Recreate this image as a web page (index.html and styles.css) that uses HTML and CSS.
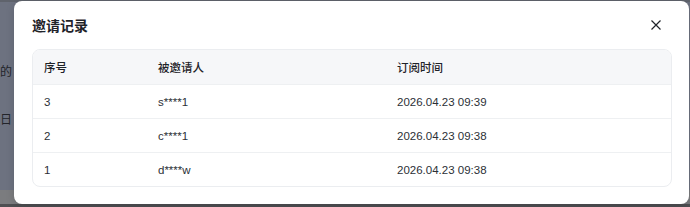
FILE: index.html
```html
<!DOCTYPE html>
<html lang="zh-CN">
  <head>
    <meta charset="UTF-8" />
    <meta name="viewport" content="width=device-width, initial-scale=1.0" />
    <title>邀请记录</title>
    <link rel="stylesheet" href="styles.css">
  </head>
  <body>
    <div class="page">
      <div class="page-top"></div>
      <div class="page-main">
        <p class="page-text first">的</p>
        <p class="page-text">日</p>
      </div>
      <div class="page-foot"></div>
    </div>

    <!-- 邀请记录弹窗 -->
    <div class="modal">
      <div class="modal-header">
        <h2>邀请记录</h2>
        <button class="close" aria-label="关闭">
          <svg width="12" height="12" viewBox="0 0 12 12">
            <path d="M1.5 1.5 L10.5 10.5 M10.5 1.5 L1.5 10.5" stroke="#1f2329" stroke-width="1.2" fill="none" />
          </svg>
        </button>
      </div>

      <div class="table">
        <div class="row head">
          <div class="cell">序号</div>
          <div class="cell">被邀请人</div>
          <div class="cell">订阅时间</div>
        </div>
        <div class="row">
          <div class="cell">3</div>
          <div class="cell">s****1</div>
          <div class="cell">2026.04.23 09:39</div>
        </div>
        <div class="row">
          <div class="cell">2</div>
          <div class="cell">c****1</div>
          <div class="cell">2026.04.23 09:38</div>
        </div>
        <div class="row">
          <div class="cell">1</div>
          <div class="cell">d****w</div>
          <div class="cell">2026.04.23 09:38</div>
        </div>
      </div>
    </div>
  </body>
</html>
```

FILE: styles.css
```css
* {
  box-sizing: border-box;
}

body {
  margin: 0;
  font-family: 'Liberation Sans', 'Noto Sans CJK SC', sans-serif;
  background-color: #6d7280;
  height: 207px;
  overflow: hidden;
}

.page {
  display: flex;
  flex-direction: column;
  height: 207px;
}

.page-top {
  height: 2px;
  background-color: #5f636c;
}

.page-main {
  flex: 1;
  padding-top: 62px;
}

.page-text {
  margin: 0;
  font-size: 12px;
  line-height: 16px;
  color: #23252b;
}

.page-text.first {
  margin-bottom: 32px;
}

.page-foot {
  height: 17px;
  background-color: #7b7c7f;
  border-bottom: 3px solid #4e4f52;
}

/* 弹窗 */
.modal {
  position: absolute;
  left: 14px;
  top: 1px;
  width: 675px;
  height: 203px;
  background-color: #fff;
  border-radius: 8px;
  box-shadow: 0 2px 8px rgba(0, 0, 0, 0.15);
  padding: 0 17px 0 18px;
}

.modal-header {
  display: flex;
  align-items: center;
  justify-content: space-between;
  height: 48px;
}

.modal-header h2 {
  margin: 0;
  font-size: 14px;
  font-weight: 600;
  color: #1f2329;
}

.close {
  border: none;
  background: none;
  padding: 0;
  width: 12px;
  height: 12px;
  margin-right: 10px;
  cursor: pointer;
  display: flex;
}

.table {
  border: 1px solid #ebedf0;
  border-radius: 8px;
  overflow: hidden;
}

.row {
  display: grid;
  grid-template-columns: 114px 239px 1fr;
  height: 34px;
  align-items: center;
  border-top: 1px solid #eef0f2;
  font-size: 11.5px;
  color: #2b2f36;
}

.row.head {
  border-top: none;
  background-color: #f6f7f9;
  font-weight: 500;
  color: #1f2329;
  height: 34px;
}

.cell {
  padding-left: 11px;
}
```
